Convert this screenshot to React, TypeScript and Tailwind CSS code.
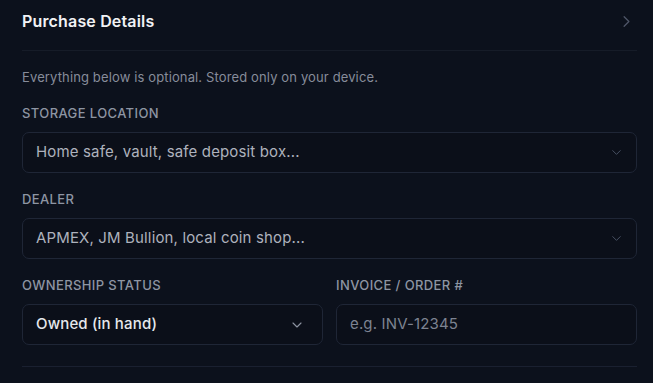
import { ChevronDown, ChevronRight } from 'lucide-react'

function Label({ children }: { children: string }) {
  return (
    <div className="text-[13px] leading-4 font-medium tracking-[0.03em] text-[#8e95a3] mb-[11px]">
      {children}
    </div>
  )
}

function SelectBox({ value, placeholder, dim = true }: { value: string; placeholder?: boolean; dim?: boolean }) {
  return (
    <div
      className={
        dim
          ? 'h-[41px] flex items-center justify-between pl-[13px] pr-[12px] rounded-[7px] border border-[#1f2636] bg-[#0b0f19]'
          : 'h-[41px] flex items-center justify-between pl-[13px] pr-[17px] rounded-[7px] border border-[#1f2636] bg-[#0b0f19]'
      }
    >
      <span
        className={
          placeholder
            ? 'text-[15px] tracking-[0.01em] text-[#aeb2bd]'
            : 'text-[15px] font-medium tracking-[0.01em] text-[#e6e8ec]'
        }
      >
        {value}
      </span>
      <ChevronDown
        size={dim ? 15 : 16}
        strokeWidth={dim ? 1.5 : 1.7}
        className={dim ? 'text-[#4b5366]' : 'text-[#8d93a1]'}
      />
    </div>
  )
}

export default function App() {
  return (
    <div
      className="w-[653px] h-[383px] overflow-hidden bg-[#0c111c] pl-[22px] pr-[16px]"
      style={{ fontFamily: 'Inter, "Noto Sans", sans-serif' }}
    >
      {/* Header */}
      <div className="flex items-center justify-between pt-[10px] pb-[18px] border-b border-[#161c28]">
        <h2 className="text-[16px] leading-[22px] font-semibold tracking-[0.01em] text-[#f1f2f5]">Purchase Details</h2>
        <ChevronRight size={19} strokeWidth={1.6} className="text-[#4f5668] mr-[1px]" />
      </div>

      <p className="mt-[18px] text-[13px] leading-4 tracking-[0.01em] text-[#878c9a]">
        Everything below is optional. Stored only on your device.
      </p>

      <div className="mt-[20px]">
        <Label>STORAGE LOCATION</Label>
        <SelectBox value="Home safe, vault, safe deposit box..." placeholder />
      </div>

      <div className="mt-[18px]">
        <Label>DEALER</Label>
        <SelectBox value="APMEX, JM Bullion, local coin shop..." placeholder />
      </div>

      <div className="mt-[18px] grid grid-cols-2 gap-[13px]">
        <div>
          <Label>OWNERSHIP STATUS</Label>
          <SelectBox value="Owned (in hand)" dim={false} />
        </div>
        <div>
          <Label>INVOICE / ORDER #</Label>
          <div className="h-[41px] flex items-center pl-[13px] rounded-[7px] border border-[#1f2636] bg-[#0b0f19]">
            <span className="text-[15px] tracking-[0.01em] text-[#7d8391]">e.g. INV-12345</span>
          </div>
        </div>
      </div>

      <div className="mt-[21px] h-px bg-[#1a2030]" />
    </div>
  )
}
